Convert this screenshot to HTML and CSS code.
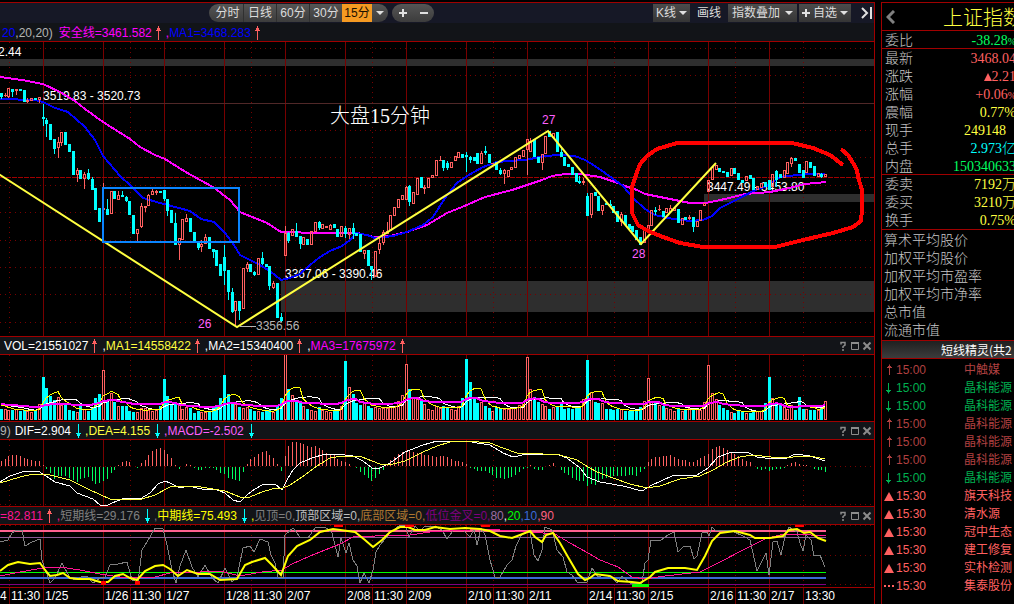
FILE: index.html
```
<!DOCTYPE html>
<html lang="zh-CN">
<head>
<meta charset="utf-8">
<title>上证指数 15分钟</title>
<link rel="stylesheet" href="styles.css">
</head>
<body>
<div class="app">
  <main class="charts">
    <div class="toolbar">
      <div class="tool-left">
        <div class="pill">
          <button>分时</button><button>日线</button><button>60分</button><button>30分</button><button class="active">15分</button><button class="more" aria-label="更多周期"><i class="caret"></i></button>
        </div>
        <div class="pill zoom">
          <button aria-label="放大"><svg width="8" height="8"><path d="M0 4H8M4 0V8"/></svg></button><button aria-label="缩小"><svg width="8" height="8"><path d="M0 4H8"/></svg></button>
        </div>
      </div>
      <div class="tool-right">
        <button class="box">K线<i class="caret"></i></button>
        <button class="plain">画线</button>
        <button class="box wide">指数叠加<i class="caret"></i></button>
        <button class="box"><svg width="8" height="8"><path d="M0 4H8M4 0V8"/></svg>自选<i class="caret"></i></button>
        <button class="fold" aria-label="收起侧栏"><svg width="12" height="12"><path d="M1 1L6 6L1 11M10 0V12"/></svg></button>
      </div>
    </div>

    <div class="legend legend-top">
      <span class="blue">20</span><span class="grey">,20,20)</span><span class="magenta first">安全线=3461.582</span><svg class="arr up" viewBox="0 0 14 16"><use href="#arrow"/></svg><span class="magenta">,</span><span class="blue">MA1=3468.283</span><svg class="arr up" viewBox="0 0 14 16"><use href="#arrow"/></svg>
    </div>
    <svg class="chart price" id="price"></svg>

    <div class="legend">
      <span class="white lead">VOL=21551027</span><svg class="arr up" viewBox="0 0 14 16"><use href="#arrow"/></svg><span class="white">,</span><span class="yellow">MA1=14558422</span><svg class="arr up" viewBox="0 0 14 16"><use href="#arrow"/></svg><span class="white">,MA2=15340400</span><svg class="arr up" viewBox="0 0 14 16"><use href="#arrow"/></svg><span class="white">,</span><span class="magenta">MA3=17675972</span><svg class="arr up" viewBox="0 0 14 16"><use href="#arrow"/></svg>
      <div class="win"><button aria-label="帮助"><svg><use href="#help"/></svg></button><button aria-label="最大化"><svg><use href="#max"/></svg></button><button aria-label="关闭"><svg><use href="#close"/></svg></button></div>
    </div>
    <svg class="chart sub" id="volume"></svg>

    <div class="legend">
      <span class="grey">9)</span><span class="white next">DIF=2.904</span><svg class="arr down" viewBox="0 0 14 16"><use href="#arrow"/></svg><span class="yellow">,DEA=4.155</span><svg class="arr down" viewBox="0 0 14 16"><use href="#arrow"/></svg><span class="violet">,MACD=-2.502</span><svg class="arr down" viewBox="0 0 14 16"><use href="#arrow"/></svg>
      <div class="win"><button aria-label="帮助"><svg><use href="#help"/></svg></button><button aria-label="最大化"><svg><use href="#max"/></svg></button><button aria-label="关闭"><svg><use href="#close"/></svg></button></div>
    </div>
    <svg class="chart sub" id="macd"></svg>

    <div class="legend">
      <span class="pink">=82.811</span><svg class="arr up" viewBox="0 0 14 16"><use href="#arrow"/></svg><span class="pink">,</span><span class="dim">短期线=29.176</span><svg class="arr down" viewBox="0 0 14 16"><use href="#arrow"/></svg><span class="dim">,</span><span class="bright">中期线=75.493</span><svg class="arr down" viewBox="0 0 14 16"><use href="#arrow"/></svg><span class="bright">,</span><span class="dim">见顶=0,</span><span class="silver">顶部区域=0,</span><span class="brown">底部区域=0,</span><span class="purple">低位金叉=0,</span><span class="mauve">80</span><span class="white">,</span><span class="green">20</span><span class="steel">,10</span><span class="rose">,90</span>
      <div class="win"><button aria-label="帮助"><svg><use href="#help"/></svg></button><button aria-label="最大化"><svg><use href="#max"/></svg></button><button aria-label="关闭"><svg><use href="#close"/></svg></button></div>
    </div>
    <svg class="chart osc" id="osc"></svg>
    <svg class="chart axis" id="axis"></svg>
  </main>

  <aside class="side">
    <header class="side-title">
      <button aria-label="返回"><svg width="9" height="14"><path d="M8 1L2 7L8 13"/></svg></button>
      <h1>上证指数</h1>
    </header>
    <dl class="quote">
      <div><dt>委比</dt><dd class="down">-38.28<small>%</small></dd></div>
    </dl>
    <dl class="quote">
      <div><dt>最新</dt><dd class="rise">3468.04</dd></div>
      <div><dt>涨跌</dt><dd class="rise"><i class="tri"></i>2.21</dd></div>
      <div><dt>涨幅</dt><dd class="rise">+0.06<small>%</small></dd></div>
      <div><dt>震幅</dt><dd>0.77%</dd></div>
      <div><dt>现手</dt><dd class="lots">249148</dd></div>
      <div><dt>总手</dt><dd class="cyan">2.973亿</dd></div>
      <div class="short"><dt>内盘</dt><dd class="down">150340633</dd></div>
    </dl>
    <dl class="quote">
      <div><dt>委卖</dt><dd>7192万</dd></div>
      <div><dt>委买</dt><dd>3210万</dd></div>
      <div><dt>换手</dt><dd>0.75%</dd></div>
    </dl>
    <ul class="stats">
      <li>算术平均股价</li><li>加权平均股价</li><li>加权平均市盈率</li><li>加权平均市净率</li><li>总市值</li><li>流通市值</li>
    </ul>
    <h2 class="feed-title">短线精灵(共2</h2>
    <table class="feed">
      <tr class="weak"><td><svg class="thin" viewBox="0 0 8 12"><use href="#thin"/></svg></td><td>15:00</td><td>中触媒</td></tr>
      <tr class="fall"><td><svg class="thin" viewBox="0 0 8 12"><use href="#thin"/></svg></td><td>15:00</td><td>晶科能源</td></tr>
      <tr class="fall"><td><svg class="thin" viewBox="0 0 8 12"><use href="#thin"/></svg></td><td>15:00</td><td>晶科能源</td></tr>
      <tr class="weak"><td><svg class="thin" viewBox="0 0 8 12"><use href="#thin"/></svg></td><td>15:00</td><td>晶科能源</td></tr>
      <tr class="weak"><td><svg class="thin" viewBox="0 0 8 12"><use href="#thin"/></svg></td><td>15:00</td><td>晶科能源</td></tr>
      <tr class="weak"><td><svg class="thin" viewBox="0 0 8 12"><use href="#thin"/></svg></td><td>15:00</td><td>晶科能源</td></tr>
      <tr class="fall"><td><svg class="thin" viewBox="0 0 8 12"><use href="#thin"/></svg></td><td>15:00</td><td>晶科能源</td></tr>
      <tr><td><i class="tri"></i></td><td>15:30</td><td>旗天科技</td></tr>
      <tr><td><i class="tri"></i></td><td>15:30</td><td>清水源</td></tr>
      <tr><td><i class="tri"></i></td><td>15:30</td><td>冠中生态</td></tr>
      <tr><td><i class="tri"></i></td><td>15:30</td><td>建工修复</td></tr>
      <tr><td><i class="tri"></i></td><td>15:30</td><td>实朴检测</td></tr>
      <tr><td><i class="dots"></i></td><td>15:30</td><td>集泰股份</td></tr>
    </table>
  </aside>
</div>

<svg class="defs">
  <symbol id="arrow" viewBox="0 0 14 16"><path d="M6 5H7V15H6ZM6 1H7V3H8V5H9V6H4V5H5V3H6Z" fill="currentColor"/></symbol>
  <symbol id="thin" viewBox="0 0 8 12"><path d="M4.5 0.5V11M2 3.5H7M3 2.5H6" stroke="currentColor" fill="none"/></symbol>
  <symbol id="help" viewBox="0 0 10 10"><path d="M3 3.500V1.500H7V4L5 5.500V7M5 8V10" stroke="currentColor" stroke-width="1.500" fill="none"/></symbol>
  <symbol id="max" viewBox="0 0 10 10"><path d="M1.500 2V8.500H8.500V2" stroke="currentColor" stroke-width="1" fill="none"/><path d="M1 1H9V3H1Z" fill="currentColor"/></symbol>
  <symbol id="close" viewBox="0 0 10 10"><path d="M1.500 1.500L8.500 8.500M8.500 1.500L1.500 8.500" stroke="currentColor" stroke-width="2" fill="none"/></symbol>
</svg>
<script src="chart.js"></script>
</body>
</html>
```

FILE: styles.css
```
* { box-sizing: border-box; }
body {
  margin: 0;
  background: #000;
  color: #c8c8c8;
  font: 12px/16px "Liberation Sans", "Noto Sans CJK SC", sans-serif;
}
button {
  border: 0;
  padding: 0;
  margin: 0;
  background: none;
  color: inherit;
  font: inherit;
  display: flex;
  align-items: center;
  justify-content: center;
}
i { font-style: normal; }
.defs { position: absolute; width: 0; height: 0; }
.app {
  display: grid;
  grid-template-columns: minmax(0, 1fr) 133px;
  gap: 6px;
  padding-top: 2px;
  overflow: hidden;
}
.charts {
  min-width: 0;
  border-top: 1px solid #a00000;
  border-right: 1px solid #a00000;
}

/* toolbar */
.toolbar {
  display: flex;
  justify-content: space-between;
  height: 20px;
  padding: 1px 1px 1px 209px;
  background: #161826;
  color: #dcdcdc;
}
.tool-left, .tool-right { display: flex; white-space: nowrap; }
.tool-left { gap: 4px; }
.tool-right { gap: 2px; }
.pill {
  display: flex;
  border-radius: 9px;
  overflow: hidden;
  background: linear-gradient(#555, #3c3c3c);
}
.pill button { width: 33px; border-left: 1px solid #303030; }
.pill button:first-child { border-left: 0; width: 34px; padding-left: 3px; }
.pill .active { background: #f59a22; color: #1a1000; width: 30px; border: 0; }
.pill .more { width: 16px; padding-right: 1px; border: 0; }
.zoom button, .zoom button:first-child { width: 21px; padding: 0; border: 0; }
.toolbar path { stroke: #e0e0e0; stroke-width: 2; fill: none; }
.caret {
  border: 4px solid transparent;
  border-top-color: #e0e0e0;
  border-bottom-width: 0;
}
.box { padding: 0 3px; gap: 3px; background: linear-gradient(#4c4c4c, #353535); }
.wide { padding: 0 4px; gap: 5px; }
.plain { width: 34px; }
.fold { width: 20px; justify-content: flex-end; }

/* indicator legends */
.legend {
  display: flex;
  align-items: center;
  height: 19px;
  border-top: 1px solid #a00000;
  border-bottom: 1px solid #a00000;
  background: #121418;
  white-space: nowrap;
}
.legend-top { border-top: 0; padding: 2px 0 0 2px; }
.lead { padding-left: 4px; }
.first { padding-left: 6px; }
.next { padding-left: 4px; }
.arr { width: 14px; height: 16px; flex: none; shape-rendering: crispEdges; }
.arr.up { color: #ff6060; }
.arr.down { color: #00ffff; transform: rotate(180deg); }
.win { margin-left: auto; display: flex; gap: 2px; padding-right: 2px; color: #8c8c8c; }
.win svg { width: 10px; height: 10px; display: block; }
.blue { color: #0000ff; }
.grey { color: #b4b4b4; }
.magenta { color: #ff00ff; }
.white { color: #fff; }
.yellow { color: #ffff40; }
.bright { color: #ffff00; }
.violet { color: #ff60ff; }
.pink { color: #ff1493; }
.dim { color: #808080; }
.silver { color: #c0c0c0; }
.brown { color: #b07830; }
.purple { color: #800080; }
.mauve { color: #9c6ca4; }
.green { color: #00ff00; }
.steel { color: #3a6ad8; }
.rose { color: #ff6080; }

/* charts */
.chart { display: block; width: 100%; overflow: hidden; shape-rendering: crispEdges; }
.price { height: 294px; }
.sub { height: 66px; }
.osc { height: 62px; }
.axis { height: 17px; border-top: 1px solid #a00000; }
.chart text { fill: #fff; font-size: 12px; }
.chart .mark { fill: #ff60ff; font-size: 12px; }
.chart .low { fill: #b4b4b4; }
.chart .caption { font-size: 20px; font-family: "Liberation Serif", "Noto Sans CJK SC", serif; font-weight: 300; }
.chart .smooth { shape-rendering: auto; }

/* sidebar */
.side {
  border-left: 1px solid #a00000;
  border-top: 1px solid #a00000;
  overflow: hidden;
  min-width: 0;
}
.side-title { display: flex; height: 27px; align-items: center; padding-left: 4px; }
.side-title path { stroke: #808080; stroke-width: 3; fill: none; }
.side-title h1 {
  margin: 0 0 0 48px;
  flex: none;
  color: #ffff40;
  font: 300 20px/27px "Noto Sans CJK SC", sans-serif;
}
.quote {
  margin: 0;
  border-top: 1px solid #a00000;
  font: 300 14px/20px "Liberation Serif", "Noto Sans CJK SC", serif;
}
.quote div { display: flex; justify-content: space-between; height: 18px; margin-right: -2px; padding-left: 3px; }
.quote:first-of-type div, .quote .short { height: 17px; }
.quote dd { margin: 0; color: #ffff40; white-space: nowrap; }
.quote small { font-size: 10px; }
.quote .down { color: #00ff60; }
.quote .rise { color: #ff6060; }
.quote .cyan { color: #00ffff; }
.quote .lots { padding-right: 10px; }
.quote .tri { display: inline-block; border: 4px solid transparent; border-bottom: 8px solid; border-top: 0; }
.stats {
  margin: 0;
  padding: 0 0 2px 2px;
  list-style: none;
  border-top: 1px solid #a00000;
  font: 300 14px/18px "Noto Sans CJK SC", sans-serif;
}
.feed-title {
  margin: 0;
  height: 19px;
  padding-left: 59px;
  border-top: 1px solid #a00000;
  border-bottom: 1px solid #a00000;
  background: linear-gradient(#202020, #3c3c3c);
  color: #fff;
  font: 12px/17px "Noto Sans CJK SC", sans-serif;
  white-space: nowrap;
}
.feed { border-collapse: collapse; margin-top: 2px; color: #ff6060; white-space: nowrap; }
.feed td { padding: 0; height: 18px; line-height: 18px; }
.feed td:first-child { width: 14px; padding-left: 2px; }
.feed td:nth-child(2) { width: 68px; }
.feed .weak { color: #b04040; }
.feed .fall { color: #00b050; }
.thin { display: block; width: 8px; height: 12px; margin-left: 1px; }
.fall .thin { transform: rotate(180deg); }
.feed .tri { display: block; width: 0; border: 5px solid transparent; border-bottom: 9px solid; border-top: 0; }
.dots { display: block; width: 10px; border-top: 2px dotted; }
```

FILE: chart.js
```
const DAY = 60.5, STEP = DAY / 16, X0 = 43;
const RED = '#ff6060', CYAN = '#00ffff', GRID = '#780000';

// candle: colour, body top, body bottom, optional high, optional low
const candles = `c 93 97 93 99;r 95 96 93 97;r 88 97 88 98;c 89 92 89 97;r 89 91 89 95;c 89 91;c 90 102;r 100 102 98 103;r 98 101;c 98 100;r 97 100 97 103;
c 117 119 104 126;c 120 124 118 137;c 124 140;c 139 149 139 154;r 142 148 137 158;r 132 143 132 146;c 132 145;c 144 152;c 151 175;r 170 175 168 182;c 170 179;r 174 179 172 189;c 173 179 169 180;c 179 190 177 190;c 188 210;c 208 222;
r 208 210 183 210;c 209 215 199 215;r 191 214;c 191 199;r 195 200 191 200;c 195 197 191 197;c 197 201 196 202;c 201 215;c 215 234;r 229 234 229 241;r 206 227 203 228;r 206 208 206 212;r 195 206 194 206;r 191 195 189 195;r 191 193 190 195;c 191 193;
c 190 199 190 201;c 199 211 199 216;c 210 223;c 223 245 213 245;r 238 245 238 260;r 219 240;r 218 222 214 222;c 218 232;c 232 242;c 243 248 243 250;r 244 247 240 252;r 237 244 234 244;c 237 249;c 249 252 249 258;c 250 266;c 264 276;
c 257 271 245 285;c 270 292 270 300;c 292 312 288 313;r 301 311 301 326;c 301 311 301 320;r 268 309;r 264 269 262 272;c 264 272;c 272 275 271 276;r 258 275;c 258 264 252 265;c 264 267;c 266 286 266 290;r 283 288 281 289;c 283 318;c 317 321 313 322;
r 233 256 226 256;c 233 241 232 243;r 229 236;c 231 237 223 237;c 236 244 236 249;r 237 245;c 239 245;r 231 245;r 222 232;c 222 228 221 230;r 224 229;r 226 228;r 225 230 224 230;c 224 228;c 229 237;r 226 237;
c 228 234 226 238;r 228 235 228 239;c 228 234 223 239;c 233 236;c 234 252;r 250 254 250 259;c 250 266;c 266 270 266 280;r 251 277;r 243 250 238 254;r 232 243 230 245;r 231 234 222 234;r 215 231;r 207 216;r 199 208;r 195 200;
r 187 200 186 200;c 186 202 185 206;r 192 204;r 178 195;c 177 188;r 187 189 185 194;r 178 188;r 175 178;r 160 176;r 160 161 156 161;c 160 168 160 171;c 163 168 161 170;r 162 168;r 156 161;r 152 158;c 154 158;
c 155 157 152 172;c 157 160 156 163;c 157 161;c 153 164;r 153 164 151 164;c 151 153 146 155;c 154 163;r 163 164;c 162 170;c 170 174 168 175;r 170 174 169 184;r 170 177;r 167 170;r 157 168;r 155 159;r 150 157;
r 139 150 139 175;r 141 152 138 152;c 139 157;c 157 163;r 154 163 154 170;r 136 154;c 131 137;r 133 138;c 132 152;c 152 157 147 157;c 157 166;c 164 167;c 167 175;c 173 182;c 181 183 176 184;r 181 183 178 185;
c 196 216 193 216;r 193 215 193 218;c 192 196;c 196 211;r 205 211 205 215;c 203 205;c 204 206 200 208;c 206 213;c 211 222;r 214 222 212 226;c 215 225;c 224 229;c 226 232;c 230 240;c 237 245;r 227 243;
r 225 232;r 210 226;c 210 212 207 215;r 209 210 205 211;c 211 217;r 208 213;r 208 212 205 212;r 208 211;c 209 223;r 218 225;c 217 220;r 217 219 215 220;c 217 227 217 232;r 221 227;r 210 221;r 203 206;
r 180 192;r 167 180;r 165 170;c 168 172;c 171 173;c 172 177;r 168 176;c 168 174;c 173 180;c 180 183;r 176 181;c 175 179;c 178 190;r 186 190;r 183 188;c 182 187;
c 180 190;r 174 187;c 171 180 170 187;c 174 178;r 170 178;r 162 174;r 158 164 157 167;c 158 161;c 164 173;c 170 178;r 161 173;c 162 168;c 166 176;r 173 177;c 174 177 173 178;r 174 177`
  .split(';').map(s => { const p = s.trim().split(' '); return { red: p[0] === 'r', v: p.slice(1).map(Number) }; });

const volumes = [11,11,10,10,11,9,10,9,8,10,16,
  43,32,24,20,23,15,15,10,9,8,14,11,9,13,22,26, 50,18,27,18,14,14,14,9,8,8,12,12,10,9,10,14,
  41,24,15,16,17,11,13,12,7,9,8,8,8,12,15,22, 45,26,18,16,13,12,13,11,9,9,8,9,10,8,15,22,
  66,31,25,20,18,14,11,10,9,13,10,9,8,9,11,14, 59,33,26,17,15,17,14,12,13,12,12,12,13,14,19,25,
  56,31,22,21,19,16,11,10,14,12,14,13,11,10,14,22, 61,38,21,17,18,14,12,9,13,11,11,11,12,13,15,16,
  63,31,23,18,16,14,11,13,13,18,11,12,11,13,14,21, 60,28,18,17,17,11,11,10,11,11,9,9,9,10,13,19,
  42,19,18,15,14,12,11,9,12,9,10,12,11,12,10,18, 55,27,21,15,12,10,8,7,10,9,7,7,9,9,9,17,
  43,22,16,15,13,11,15,10,23,11,11,10,10,10,14,19];

const hist = [5,7,10,11,11,10,8,7,6,5,5,
  1,-2,-6,-12,-9,-9,-9,-11,-13,-15,-12,-11,-10,-14,-17,-16, -14,-12,-6,-3,1,4,5,4,0,-1,3,6,11,15,17,18,
  16,12,8,1,-2,0,2,1,-1,-3,-3,-1,-1,-1,-3,-6, -7,-11,-12,-13,-14,-5,2,7,9,12,14,15,11,8,2,-4,
  10,20,24,24,23,22,20,19,20,18,16,13,12,11,7,5, 4,2,0,-1,-5,-8,-11,-14,-11,-7,-3,2,6,9,12,14,
  15,15,14,13,13,11,11,10,9,10,10,9,7,5,5,4, 2,-1,-2,-4,-4,-4,-6,-8,-11,-11,-12,-11,-10,-8,-5,-2,
  -1,1,-2,-3,-3,0,1,3,0,-3,-6,-8,-11,-13,-14,-14, -19,-17,-18,-15,-12,-11,-11,-9,-9,-9,-9,-8,-8,-9,-5,-2,
  4,7,9,9,10,10,11,9,7,6,6,4,4,6,8,10, 12,17,19,20,18,16,14,12,10,7,5,4,0,-2,-3,-2,
  -4,-3,-2,-2,-1,1,3,4,2,1,1,0,-2,-3,-3,-5];

const lines = {
  ma: '0,99 35,100 43,102 55,108 68,112 85,127 95,140 103,156 115,170 120,176 130,185 143,198 160,203 175,207 190,211 201,219 214,222 225,233 234,245 240,255 258,264 270,271 281,280 290,278 300,274 310,265 320,257 330,251 342,246 350,240 356,233 367,235 375,238 393,236 407,232 423,225 433,217 445,198 457,183 467,176 483,167 497,162 510,161 525,160 535,158 545,156 560,155 575,156 585,160 595,166 605,173 612,178 623,186 633,198 645,209 655,215 673,219 690,221 703,220 712,216 720,208 740,198 753,191 767,186 780,177 806,174 825,174',
  safe: '0,77 22,80 43,84 60,92 75,101 85,109 103,122 130,139 140,147 155,155 165,159 184,171 200,180 213,187 230,200 240,212 267,223 281,232 320,233 358,233 374,237 390,236 407,232 427,225 447,213 462,207 485,197 512,190 530,184 542,180 552,176 565,174 580,174 600,177 615,182 625,186 637,190 645,194 660,197 675,200 690,203 706,203 725,199 745,194 770,192 785,189 805,184 826,182',
  dif: '0,482 10,476 22,472 38,471 43,474 55,482 70,486 77,493 93,499 100,505 106,506 112,503 125,498 140,499 150,493 158,484 165,481 170,483 180,488 188,486 202,489 215,489 225,493 233,500 240,502 248,494 255,489 262,485 275,484 282,490 287,480 293,470 300,463 312,458 325,454 337,454 353,456 363,461 372,468 378,469 390,463 405,452 423,445 437,441 467,441 477,443 490,445 503,453 513,457 527,454 543,455 557,454 567,458 580,468 587,477 600,482 623,486 642,491 652,485 672,476 697,475 708,468 718,457 732,452 747,452 757,457 772,459 787,458 795,454 810,456 825,461',
  dea: '0,483 20,477 33,474 50,475 70,480 90,490 110,499 125,500 142,499 155,495 170,487 178,486 195,486 225,491 240,497 250,497 262,492 272,489 283,488 290,485 302,477 317,466 330,458 343,456 362,457 372,461 380,464 393,464 405,461 423,452 437,446 450,442 467,441 490,443 503,448 517,453 543,454 560,455 577,460 588,467 597,472 613,478 630,484 647,488 660,486 680,479 700,476 713,470 727,462 740,457 753,455 780,458 793,457 810,456 825,459',
  fast: '0,542 8,540 12,533 17,530 22,530 25,546 32,542 40,539 42,560 50,583 55,578 62,563 70,578 77,580 82,576 87,576 93,583 100,578 105,577 110,565 118,564 127,562 132,580 138,582 142,550 150,537 155,528 163,529 167,545 172,570 176,583 180,566 186,550 192,567 198,577 205,565 212,578 218,583 225,568 232,582 237,577 243,548 250,546 254,552 260,539 268,542 271,555 275,563 278,577 283,578 285,535 293,528 300,537 308,538 315,528 325,527 332,533 335,545 338,557 341,538 346,553 349,543 353,560 357,566 360,583 364,573 369,583 373,570 376,552 380,545 390,533 400,525 405,525 409,537 415,526 420,531 425,526 435,526 442,530 447,539 453,531 463,530 470,537 474,529 477,545 481,528 485,535 490,560 495,577 500,577 507,565 512,560 516,546 522,534 530,532 534,555 538,561 542,550 545,527 552,530 557,550 563,557 567,572 572,575 577,582 587,582 592,568 598,577 604,575 612,577 617,583 622,576 630,583 642,583 645,563 648,560 651,540 660,541 668,535 674,532 678,552 684,546 690,546 694,559 697,556 702,533 707,532 709,536 712,527 716,531 730,530 745,537 750,540 757,571 766,553 769,575 773,542 777,541 781,555 786,532 789,527 797,532 800,543 803,551 806,535 811,540 814,556 820,555 825,567',
  mid: '0,571 8,565 18,562 30,564 40,563 45,570 50,576 57,575 63,573 70,578 78,579 90,579 100,582 108,582 115,576 123,574 130,578 137,580 145,571 155,566 163,565 170,569 178,576 187,570 198,574 210,574 220,580 237,579 245,565 252,562 265,558 272,565 281,575 288,556 297,546 310,540 320,532 333,529 355,532 365,540 373,547 382,540 390,532 400,527 408,527 415,530 425,530 435,527 450,529 465,528 480,529 490,531 500,536 512,538 520,535 530,531 535,537 542,542 546,535 553,533 560,543 568,557 578,574 585,580 590,578 595,574 610,576 618,581 632,582 640,583 650,577 655,572 668,568 685,568 697,570 705,556 712,541 720,533 735,531 750,535 755,538 770,538 783,536 789,530 797,529 804,533 810,532 818,538 826,541',
  slow: '0,576 20,572 43,568 60,567 80,570 100,574 120,577 155,577 170,573 200,572 220,571 240,576 262,572 282,570 292,564 310,556 340,544 355,536 375,536 410,535 430,532 450,531 490,529 500,530 530,532 555,534 570,543 588,553 600,560 618,567 632,577 645,579 665,576 700,572 720,562 745,549 765,539 780,535 795,534 826,536'
};

const solid = [43, 103, 164, 224, 285, 345, 406, 466, 527, 587, 648, 708, 769];
const dotted = [9, 130, 251, 372, 493, 614, 735, 803];
const days = ['1/25', '1/26', '1/27', '1/28', '2/07', '2/08', '2/09', '2/10', '2/11', '2/14', '2/15', '2/16', '2/17'];

const rect = (x, y, w, h, fill, more = '') => `<rect x="${x}" y="${y}" width="${w}" height="${h}" fill="${fill}" ${more}/>`;
const poly = (pts, stroke, w = 1, cls = '') => `<polyline points="${pts}" fill="none" stroke="${stroke}" stroke-width="${w}" class="${cls}"/>`;
const text = (x, y, s, cls = '') => `<text x="${x}" y="${y}" class="${cls}">${s}</text>`;
const vline = (x, y1, y2, c, dash = '') => `<line x1="${x + .5}" x2="${x + .5}" y1="${y1}" y2="${y2}" stroke="${c}" ${dash}/>`;
const hline = (y, c, dash = '', x2 = '100%') => `<line x1="0" x2="${x2}" y1="${y + .5}" y2="${y + .5}" stroke="${c}" ${dash}/>`;
const DOT = 'stroke-dasharray="1 4"';
const barX = i => Math.floor(X0 + (i - 11) * STEP);

function grid(top, bottom, rows) {
  return solid.map(x => vline(x, top, bottom, GRID)).join('') +
    dotted.map(x => vline(x, top, bottom, GRID, DOT)).join('') +
    rows.map(y => hline(y, GRID, DOT)).join('');
}
function draw(id, top, body) {
  document.getElementById(id).innerHTML = `<g transform="translate(0 ${-top})">${body}</g>`;
}
function average(n) {
  return volumes.map((_, i) => {
    const part = volumes.slice(Math.max(0, i - n + 1), i + 1);
    const base = i < n - 1 ? 16 * (n - part.length) : 0;
    return `${barX(i)},${420 - (part.reduce((a, b) => a + b, 0) + base) / n}`;
  }).join(' ');
}

draw('price', 42,
  rect(0, 59, '100%', 7, '#2e2e2e') + rect(281, 281, '100%', 31, '#2e2e2e') + rect(704, 194, '100%', 8, '#2e2e2e') +
  grid(42, 336, [48, 75, 130, 157, 185, 212, 240, 267, 294, 322]) +
  hline(103, '#502828') + hline(177, '#a00000', 'stroke-dasharray="5 1"') +
  text(43, 100, '3519.83 - 3520.73') + text(285, 278, '3367.06 - 3390.46') + text(707, 191, '3447.49 - 3453.80') + text(-2, 56, '2.44') +
  poly(lines.safe, '#ff00ff', 2) + poly(lines.ma, '#0000ff', 2) +
  candles.map((c, i) => {
    const x = barX(i), [t, b, h = t, l = b] = c.v;
    if (!c.red) return rect(x, h, 1, l - h, CYAN) + rect(x - 1, t, 3, b - t, CYAN);
    const wick = rect(x, h, 1, t - h, RED) + rect(x, b, 1, l - b, RED);
    return wick + (b - t < 3 ? rect(x - 1, t, 3, b - t, RED) : `<rect x="${x - .5}" y="${t + .5}" width="2" height="${b - t - 1}" fill="none" stroke="${RED}"/>`);
  }).join('') +
  poly('-3,173 237,327 548,131 641,244 716,163', '#ffff40', 2, 'smooth') +
  '<rect x="103" y="188" width="136" height="54" fill="none" stroke="#0a84ff" stroke-width="2"/>' +
  rect(240, 326, 16, 1, '#b4b4b4') + text(256, 330, '3356.56', 'low') +
  text(198, 328, '26', 'mark') + text(542, 124, '27', 'mark') + text(632, 258, '28', 'mark') +
  text(330, 123, '大盘15分钟', 'caption') +
  poly('843,165 830,155 813,148 792,143 677,143 657,149 647,156 640,164 637,172 632,187 632,213 638,225 648,231 663,237 680,243 703,247 775,247 803,240 833,233 853,227 861,221 862,210 862,190 858,177 857,170 853,163 848,155 841,149', '#ff0000', 4));

draw('volume', 355,
  grid(355, 421, [376]) +
  volumes.map((v, i) => {
    const x = barX(i), y = 420 - v;
    return candles[i].red ? `<rect x="${x - .5}" y="${y + .5}" width="2" height="${v - 1}" fill="#000" stroke="${RED}"/>` : rect(x - 1, y, 3, v, CYAN);
  }).join('') +
  poly(average(10), '#fff') + poly(average(5), '#ffff00') + poly(average(20), '#ff00ff', 2));

draw('macd', 440,
  grid(440, 506, [466, 504]) +
  hist.map((v, i) => v > 0 ? rect(barX(i), 466 - v, 1, v, RED) : rect(barX(i), 467, 1, -v, '#00ff60')).join('') +
  poly(lines.dif, '#fff') + poly(lines.dea, '#ffff40'));

draw('osc', 525,
  grid(525, 587, [525, 555, 584]) +
  rect(0, 530, 826, 2, '#ff6090') + rect(0, 537, 826, 1, '#8c5a96') + rect(0, 572, 826, 1, '#00ff00') +
  rect(0, 577, 826, 2, '#3a6ad8') + rect(0, 584, 826, 1, '#800080') +
  poly(lines.fast, '#808080') + poly(lines.slow, '#ff1493') + poly(lines.mid, '#ffff00', 2, 'smooth') +
  [334, 405, 481, 795].map(x => rect(x, 525, 9, 2, '#f00')).join('') +
  rect(101, 581, 5, 4, '#f00') + rect(135, 581, 5, 4, '#f00') + rect(632, 584, 17, 3, '#0f0'));

draw('axis', 588,
  solid.concat(dotted).map(x => vline(x, 588, 604, GRID)).join('') + text(0, 600, '4') +
  days.map((d, i) => text(solid[i] + 2, 600, d)).join('') +
  dotted.map((x, i) => text(x + 2, 600, i === 7 ? '13:30' : '11:30')).join(''));
```
